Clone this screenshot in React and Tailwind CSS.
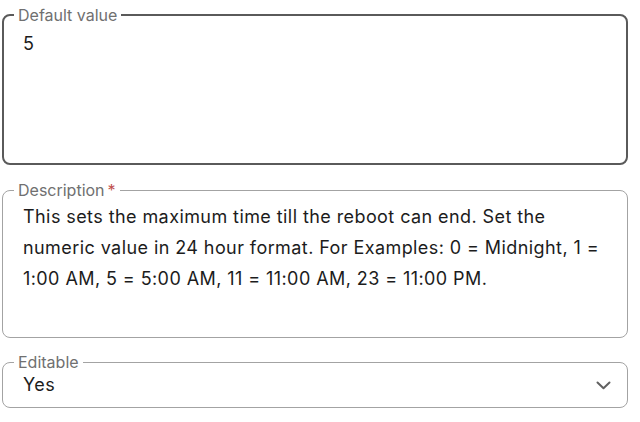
import React from "react";

function Chevron() {
  return (
    <svg width="15" height="9" viewBox="0 0 15 9" className="block">
      <polyline points="1.5,1.5 7.5,7.2 13.5,1.5" fill="none" stroke="#616161" strokeWidth="2" strokeLinecap="round" strokeLinejoin="round" />
    </svg>
  );
}

export default function App() {
  return (
    <div className="w-[640px] h-[422px] bg-white pl-[2px] pt-[6px] font-['Inter',sans-serif]">
      <div className="w-[626px] flex flex-col">
        <fieldset className="h-[159px] border-2 border-[#5a5a5a] rounded-[8px] px-[19px]">
          <legend className="ml-[-9px] px-[4px] text-[16px] leading-[18px] text-[#707070]">Default value</legend>
          <div className="pt-[8px] text-[18px] leading-[24px] text-[#1c1c1c]">5</div>
        </fieldset>
        <fieldset className="mt-[16px] h-[157px] border border-[#a3a3a3] rounded-[8px] pl-[20px] pr-[15px]">
          <legend className="ml-[-9px] px-[4px] text-[16px] leading-[18px] text-[#707070]">
            Description<span className="ml-[3px] text-[#c0504d]">*</span>
          </legend>
          <p className="pt-[2px] text-[18px] leading-[31px] tracking-[0.42px] text-[#1c1c1c]">
            This sets the maximum time till the reboot can end. Set the numeric value in 24 hour format. For Examples: 0 = Midnight, 1 = 1:00 AM, 5 = 5:00 AM, 11 = 11:00 AM, 23 = 11:00 PM.
          </p>
        </fieldset>
        <fieldset className="mt-[15px] h-[55px] border border-[#a3a3a3] rounded-[8px] pl-[20px] pr-[16px]">
          <legend className="ml-[-9px] px-[4px] text-[16px] leading-[18px] text-[#707070]">Editable</legend>
          <div className="pt-[2px] flex items-center justify-between">
            <span className="text-[18px] leading-[24px] tracking-[0.4px] text-[#1c1c1c]">Yes</span>
            <Chevron />
          </div>
        </fieldset>
      </div>
    </div>
  );
}
